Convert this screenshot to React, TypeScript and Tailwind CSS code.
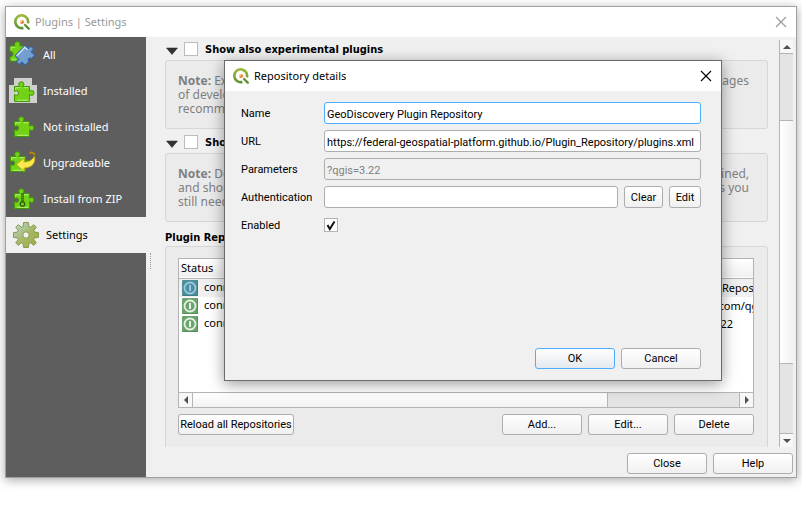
import React, { useId } from "react";

const PUZZLE =
  "M2.5 5.5h5.6C7.2 4.9 6.7 4.100 6.700 3.200a2.600 2.400 0 0 1 5.200 0c0 .9-.5 1.700-1.400 2.300H17.500v5c.6-.7 1.300-1.100 2.200-1.100a2.300 2.500 0 0 1 0 5c-.9 0-1.600-.4-2.200-1.100v7.200h-15v-7c.6.5 1.200.8 2 .8a2.100 2.200 0 0 0 0-4.400c-.8 0-1.400.3-2 .8z";

function Puzzle() {
  return (
    <>
      <path d={PUZZLE} fill="#73d216" stroke="#3f9a06" strokeWidth="1" strokeLinejoin="round" />
      <path d="M3.700 9V6.700h5M11.500 6.700h4.800M5 19.300h11.300" fill="none" stroke="#b6f07a" strokeWidth="1" />
    </>
  );
}

function Logo() {
  const id = useId();
  return (
    <svg viewBox="0 0 16 16" className="size-4 shrink-0" aria-hidden="true">
      <defs>
        <linearGradient id={id} x1="0" y1="0" x2="0" y2="1">
          <stop offset="0" stopColor="#9cba3c" />
          <stop offset="1" stopColor="#5f9330" />
        </linearGradient>
      </defs>
      <path d="M13.900 9.400A6.400 6.400 0 1 0 9.400 13.900" fill="none" stroke={`url(#${id})`} strokeWidth="2.600" />
      <path d="M9.600 11l1.400-1.400 4.800 4.400v1.700h-1.700z" fill="#5b9030" />
      <path d="M6 6h3l1.400 2.200-2.200 2L6 9z" fill="#ee7a30" />
      <path d="M6 6h2.600L7.400 8.400 6 8.800z" fill="#fbd8a0" />
    </svg>
  );
}

function AllIcon() {
  return (
    <svg viewBox="0 0 28 28" className="size-7" aria-hidden="true">
      <path d="M1 5h5C4.800 2.800 6 .8 8.300.8s3.500 2 2.200 4.200H15v15H1v-4.500c4 1 4-6 0-4.500z" fill="#73d216" stroke="#3f9a06" />
      <path d="M2.200 9V6.200h4M2.500 18.800H7" stroke="#b6f07a" fill="none" />
      <g transform="rotate(43 16 14.500)">
        <path
          d="M9 7.500h5c-1.300-1.600-.6-3.800 1.800-3.800s3.200 2.200 1.900 3.800h5.300v5.200c-2.800-.9-3 4-0 3.300v5.500h-5.200c1.300 1.700.4 3.700-1.800 3.700s-3-2-1.800-3.700H9z"
          fill="#729fcf" stroke="#3465a4" strokeLinejoin="round" />
        <path d="M10.200 20.500v-12H14" stroke="#cfe2f7" strokeWidth="1.400" fill="none" />
      </g>
    </svg>
  );
}

function InstalledIcon() {
  return (
    <svg viewBox="0 0 28 28" className="size-7" aria-hidden="true">
      <path d="M5 1h18v7h5v18H0V8h5z" fill="#d0d1cc" />
      <g transform="translate(3 4)"><Puzzle /></g>
    </svg>
  );
}

function NotInstalledIcon() {
  return (
    <svg viewBox="0 0 28 28" className="size-7" aria-hidden="true">
      <g transform="translate(3 3)"><Puzzle /></g>
    </svg>
  );
}

function UpgradeIcon() {
  return (
    <svg viewBox="0 0 28 28" className="size-7" aria-hidden="true">
      <g transform="translate(-1 2)"><Puzzle /></g>
      <path d="M20.500 4.500c2-1.600 5-1 4.800 1.500" fill="none" stroke="#b58900" strokeWidth="2" />
      <path d="M7.500 15.500 15 9v4c4.500.2 8-1.500 10.500-6 1.500 7-2.500 12-10.500 12v3.500z" fill="#fce94f" stroke="#c4a000" strokeWidth=".8" />
    </svg>
  );
}

function ZipIcon() {
  return (
    <svg viewBox="0 0 28 28" className="size-7" aria-hidden="true">
      <g transform="translate(3 3)"><Puzzle /></g>
      <path d="M13.500 8.500v9" stroke="#2e5f10" strokeWidth="3" strokeDasharray="1.200 .8" />
      <circle cx="13.500" cy="19" r="2.200" fill="#73d216" stroke="#2e5f10" strokeWidth="1.300" />
    </svg>
  );
}

function GearIcon() {
  const id = useId();
  return (
    <svg viewBox="0 0 28 28" className="size-7" aria-hidden="true">
      <defs>
        <linearGradient id={id} x1="0" y1="0" x2="1" y2="1">
          <stop offset="0" stopColor="#b9d9e0" />
          <stop offset=".5" stopColor="#a6b868" />
          <stop offset="1" stopColor="#98ad3c" />
        </linearGradient>
      </defs>
      <path
        fill={`url(#${id})`}
        stroke="#8a9a4e"
        strokeLinejoin="round"
        fillRule="evenodd"
        d="M11.600 1.500h4.800l.5 4 1.700.7L21.800 3.700l2.500 2.500-2.500 3.200.7 1.700 4 .5v4.800l-4 .5-.7 1.700 2.500 3.200-2.500 2.500-3.200-2.500-1.700.7-.5 4h-4.800l-.5-4-1.700-.7-3.200 2.500-2.500-2.500 2.500-3.200-.7-1.700-4-.5v-4.800l4-.5.7-1.700L3.700 6.200l2.500-2.500 3.200 2.500 1.700-.7zM14 10.800a3.200 3.200 0 1 0 0 6.400a3.200 3.200 0 1 0 0-6.400z" />
    </svg>
  );
}

function StatusIcon({ selected }: { selected?: boolean }) {
  return (
    <svg viewBox="0 0 16 16" className="size-4 shrink-0" aria-hidden="true">
      <rect width="16" height="16" rx="1" fill={selected ? "#4a9096" : "#6ba46c"} />
      <path d="M.5 15.500h15V.5" fill="none" stroke={selected ? "#3a7d80" : "#55905a"} />
      <circle cx="8" cy="8" r="5.500" fill="none" stroke={selected ? "#9cc4ea" : "#e8f0e6"} strokeWidth="1.800" />
      <path d="M8 5v6" stroke={selected ? "#9cc4ea" : "#e8f0e6"} strokeWidth="2" />
    </svg>
  );
}

function CloseGlyph() {
  return (
    <svg viewBox="0 0 12 12" className="size-3" aria-hidden="true">
      <path d="M1 1l10 10M11 1L1 11" stroke="currentColor" strokeWidth="1.100" />
    </svg>
  );
}

function Arrow({ dir }: { dir: "up" | "down" | "left" | "right" }) {
  const d = {
    up: "M0 6h8L4 2z",
    down: "M0 2h8L4 6z",
    left: "M6 0v8L2 4z",
    right: "M2 0v8l4-4z",
  }[dir];
  return (
    <svg viewBox="0 0 8 8" className="size-2" aria-hidden="true">
      <path d={d} fill="#505050" />
    </svg>
  );
}

const BUTTON =
  "rounded-[3px] border bg-linear-to-b from-white pt-[2px] font-['Roboto',sans-serif] text-center text-[11px] whitespace-nowrap";
const PLAIN = `${BUTTON} h-[21px] border-[#adadad] to-[#f0f0f0]`;
const FIELD = "h-[22px] min-w-0 rounded-[3px] border px-[2px] pt-[2px]";
const FIELD_PLAIN = `${FIELD} border-[#adadad]`;
const LABEL = "pt-[2px]";

const NAV = [
  { label: "All", icon: <AllIcon /> },
  { label: "Installed", icon: <InstalledIcon /> },
  { label: "Not installed", icon: <NotInstalledIcon /> },
  { label: "Upgradeable", icon: <UpgradeIcon /> },
  { label: "Install from ZIP", icon: <ZipIcon /> },
  { label: "Settings", icon: <GearIcon />, active: true },
];

const REPOS = [
  { name: "GeoDiscovery Plugin Repository", url: "https://federal-geospatial-platform.github.io/Plugin_Repository/plugins.xml?qgis=3.22", selected: true },
  { name: "Planet Plugin Repository", url: "https://planetlabs-maps-plugins.githubusercontent.com/qgis/plugins.xml?qgis=3.22" },
  { name: "QGIS Official Repository", url: "https://plugins.qgis.org/plugins/plugins.xml?qgis=3.22" },
];

function NoteGroup({ title, lines }: { title: string; lines: [string, string][] }) {
  return (
    <section className="mb-[6px]">
      <div className="flex h-[18px] items-start gap-[6px]">
        <button aria-label={`Collapse ${title}`} className="mt-[5px] ml-px">
          <svg viewBox="0 0 12 8" className="h-2 w-3" aria-hidden="true">
            <path d="M.5 1h11L6 7.500z" fill="#333" stroke="#222" strokeWidth=".5" />
          </svg>
        </button>
        <label className="flex items-start gap-[7px] font-['DejaVu_Sans_Condensed',sans-serif] text-[11px] leading-[16px] font-bold">
          <input type="checkbox" className="size-[14px] appearance-none border border-[#bcbcbc] bg-white" />
          {title}
        </label>
      </div>
      <div className="rounded-[3px] border border-[#d6d6d6] bg-[#ebebeb] px-3 pt-[13px] pb-3 leading-[14px] text-[#808080]">
        {lines.map(([start, end], i) => (
          <p key={start} className="flex justify-between whitespace-nowrap">
            <span>
              {i === 0 && <b>Note: </b>}
              {start}
            </span>
            <span className="mr-[6px]">{end}</span>
          </p>
        ))}
      </div>
    </section>
  );
}

function Dialog() {
  return (
    <div
      role="dialog"
      aria-label="Repository details"
      className="absolute top-[60px] right-[80px] left-[224px] flex min-h-[321px] flex-col border border-[#6b6b6b] bg-[#f0f0f0] font-['Roboto',sans-serif] text-[11px] shadow-[0_3px_14px_rgba(0,0,0,0.4)]">
      <header className="flex h-[30px] items-center bg-white pr-[9px] pl-2">
        <Logo />
        <h2 className="ml-[5px] flex-1 font-['Noto_Sans',sans-serif]">Repository details</h2>
        <button aria-label="Close dialog"><CloseGlyph /></button>
      </header>
      <form className="flex flex-1 flex-col px-4 pr-5 pt-[11px] pb-[11px]" onSubmit={(e) => e.preventDefault()}>
        <div className="grid grid-cols-[83px_1fr] items-center gap-y-[6px]">
          <label htmlFor="name" className={LABEL}>Name</label>
          <input id="name" className={`${FIELD} border-[#4daeff] bg-white`} defaultValue="GeoDiscovery Plugin Repository" />
          <label htmlFor="url" className={LABEL}>URL</label>
          <input id="url" className={`${FIELD_PLAIN} bg-white`} defaultValue="https://federal-geospatial-platform.github.io/Plugin_Repository/plugins.xml" />
          <label htmlFor="params" className={LABEL}>Parameters</label>
          <input id="params" readOnly className={`${FIELD_PLAIN} text-[#808080]`} defaultValue="?qgis=3.22" />
          <label htmlFor="auth" className={LABEL}>Authentication</label>
          <div className="flex gap-[6px]">
            <input id="auth" className={`${FIELD_PLAIN} flex-1 bg-white`} />
            <button className={`${BUTTON} h-[22px] w-[39px] border-[#adadad] to-[#f0f0f0]`}>Clear</button>
            <button className={`${BUTTON} h-[22px] w-8 border-[#adadad] to-[#f0f0f0]`}>Edit</button>
          </div>
          <label htmlFor="enabled" className={LABEL}>Enabled</label>
          <div className="grid h-[22px] items-center">
            <input
              id="enabled"
              type="checkbox"
              defaultChecked
              className="peer col-start-1 row-start-1 size-[14px] appearance-none border border-[#b4b4b4] bg-white" />
            <svg viewBox="0 0 14 14" className="pointer-events-none col-start-1 row-start-1 hidden size-[14px] peer-checked:block" aria-hidden="true">
              <path d="M3.500 7l2.300 4L10.500 3.500" fill="none" stroke="#111" strokeWidth="2" />
            </svg>
          </div>
        </div>
        <div className="mt-auto flex justify-end gap-[6px]">
          <button className={`${BUTTON} h-[21px] w-20 border-[#4daeff] to-[#e4e9ee]`}>OK</button>
          <button className={`${PLAIN} w-20`}>Cancel</button>
        </div>
      </form>
    </div>
  );
}

export default function App() {
  return (
    <div className="relative min-h-screen bg-white px-[5px] pt-[6px] font-['Noto_Sans',sans-serif] text-[12px] text-black">
      <main className="flex min-h-[472px] flex-col border border-[#a0a0a0] bg-[#f0f0f0] shadow-[0_2px_10px_rgba(0,0,0,0.35)]">
        <header className="flex h-[30px] items-center bg-white pr-[9px] pl-2 text-[11px] text-[#999]">
          <Logo />
          <h1 className="ml-[5px] flex-1">Plugins | Settings</h1>
          <button aria-label="Close window"><CloseGlyph /></button>
        </header>
        <div className="flex flex-1">
          <nav className="w-[140px] shrink-0 bg-[#5e5e5e] text-[11px]">
            {NAV.map((n) => (
              <button
                key={n.label}
                className={`flex h-9 w-full items-center gap-[6px] ${n.active ? "bg-[#f0f0f0] pl-[6px] text-black" : "pl-[3px] text-white"}`}>
                {n.icon}
                {n.label}
              </button>
            ))}
          </nav>
          <div className="flex w-[19px] shrink-0 items-start pt-[216px] pl-1">
            <div className="h-4 border-l border-dotted border-[#a0a0a0]" />
          </div>
          <div className="flex min-w-0 flex-1 flex-col pt-[3px]">
            <div className="flex h-[407px]">
              <div className="min-w-0 flex-1 overflow-hidden pt-[2px]">
                <NoteGroup
                  title="Show also experimental plugins"
                  lines={[
                    ["Experimental plugins are generally unsuitable for production.", "These are in early stages"],
                    ["of development, and should be considered 'incomplete' or 'proof of concept'.", ""],
                    ["recommend installing these plugins unless you intend to use them.", ""],
                  ]} />
                <NoteGroup
                  title="Show also deprecated plugins"
                  lines={[
                    ["Deprecated plugins are generally unsuitable for production use.", "They are unmaintained,"],
                    ["and should be considered 'obsolete' tools. QGIS does not", "recommend these unless you"],
                    ["still need it and there are no other alternatives available.", ""],
                  ]} />
                <h2 className="mt-2 mb-px font-['DejaVu_Sans_Condensed',sans-serif] text-[11px] leading-[15px] font-bold">Plugin Repositories</h2>
                <div className="h-[220px] rounded-[3px] border border-[#d6d6d6] bg-[#ebebeb] pt-[11px] pr-[13px] pl-3">
                  <div className="flex h-[150px] flex-col border border-[#b4b4b4] bg-white">
                    <div className="min-h-0 flex-1 overflow-hidden">
                      <table className="w-full table-fixed border-collapse text-left text-[11px] whitespace-nowrap">
                        <thead>
                          <tr className="h-[19px] border-b border-[#b4b4b4] bg-linear-to-b from-white to-[#f0f0f0]">
                            <th className="w-[90px] p-0 pl-[2px] leading-[18px] font-normal">Status</th>
                            <th className="w-[182px] p-0 leading-[18px] font-normal">Name</th>
                            <th className="p-0 leading-[18px] font-normal">URL</th>
                          </tr>
                        </thead>
                        <tbody>
                          {REPOS.map((r) => (
                            <tr key={r.name} className={r.selected ? "bg-[#f0f0f0]" : ""}>
                              <td className="p-0 pl-[3px]">
                                <div className="flex h-[18px] items-center gap-[6px]">
                                  <StatusIcon selected={r.selected} />
                                  connected
                                </div>
                              </td>
                              <td className="overflow-hidden p-0 leading-[18px]">{r.name}</td>
                              <td className="overflow-hidden p-0 leading-[18px]">{r.url}</td>
                            </tr>
                          ))}
                        </tbody>
                      </table>
                    </div>
                    <div className="flex h-[15px] border-t border-[#b4b4b4] bg-[#e4e4e4]">
                      <button aria-label="Scroll left" className="flex w-[14px] items-center justify-center border-r border-[#b4b4b4] bg-[#f7f7f7]"><Arrow dir="left" /></button>
                      <div className="w-[415px] border-r border-[#b4b4b4] bg-linear-to-b from-white to-[#f2f2f2]" />
                      <button aria-label="Scroll right" className="ml-auto flex w-[14px] items-center justify-center border-l border-[#b4b4b4] bg-[#f7f7f7]"><Arrow dir="right" /></button>
                    </div>
                  </div>
                  <div className="mt-[6px] flex gap-[6px]">
                    <button className={`${PLAIN} mr-auto w-[116px]`}>Reload all Repositories</button>
                    <button className={`${PLAIN} w-20`}>Add...</button>
                    <button className={`${PLAIN} w-20`}>Edit...</button>
                    <button className={`${PLAIN} w-20`}>Delete</button>
                  </div>
                </div>
              </div>
              <div className="mr-[3px] ml-[11px] flex w-[14px] shrink-0 flex-col border-l border-[#b4b4b4] bg-[#e4e4e4]">
                <button aria-label="Scroll up" className="flex h-[14px] items-center justify-center border-b border-[#b4b4b4] bg-[#f7f7f7]"><Arrow dir="up" /></button>
                <div className="mt-[66px] h-[244px] border-y border-[#b4b4b4] bg-linear-to-r from-white to-[#f2f2f2]" />
                <button aria-label="Scroll down" className="mt-auto flex h-[14px] items-center justify-center border-t border-[#b4b4b4] bg-[#f7f7f7]"><Arrow dir="down" /></button>
              </div>
            </div>
            <div className="mt-[6px] mr-[3px] flex justify-end gap-[6px]">
              <button className={`${PLAIN} w-20`}>Close</button>
              <button className={`${PLAIN} w-20`}>Help</button>
            </div>
          </div>
        </div>
      </main>
      <Dialog />
    </div>
  );
}
